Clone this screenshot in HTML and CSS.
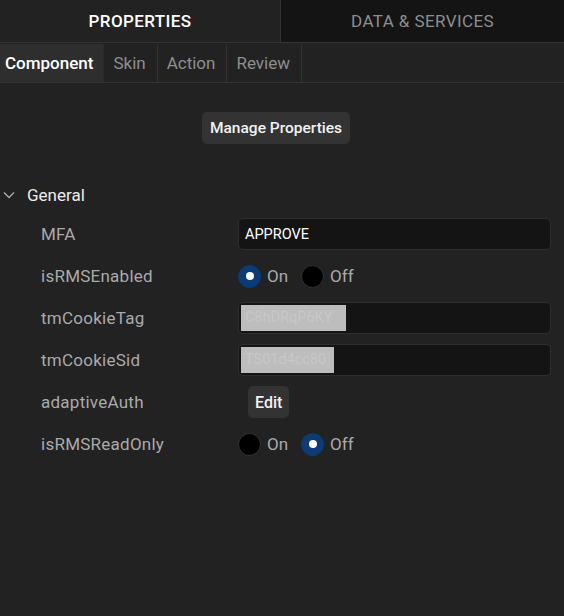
FILE: index.html
```html
<!DOCTYPE html>
<html lang="en">
<head>
  <meta charset="UTF-8">
  <title>Properties</title>
  <link rel="stylesheet" href="styles.css">
</head>
<body>
  <div class="panel">
    <div class="main-tabs">
      <div class="main-tab active">PROPERTIES</div>
      <div class="main-tab">DATA &amp; SERVICES</div>
    </div>
    <div class="sub-tabs">
      <div class="sub-tab active">Component</div>
      <div class="sub-tab">Skin</div>
      <div class="sub-tab">Action</div>
      <div class="sub-tab">Review</div>
    </div>

    <div class="manage">
      <button class="btn">Manage Properties</button>
    </div>

    <div class="section-head">
      <svg class="chevron" width="12" height="8" viewBox="0 0 12 8">
        <path d="M1 1.5 L6 6.5 L11 1.5" fill="none" stroke="#aaa" stroke-width="1.4"/>
      </svg>
      <span>General</span>
    </div>

    <div class="props">
      <div class="row">
        <div class="label">MFA</div>
        <div class="value"><div class="field">APPROVE</div></div>
      </div>
      <div class="row">
        <div class="label">isRMSEnabled</div>
        <div class="value radios">
          <span class="radio checked"></span><span class="radio-text">On</span>
          <span class="radio"></span><span class="radio-text">Off</span>
        </div>
      </div>
      <div class="row">
        <div class="label">tmCookieTag</div>
        <div class="value"><div class="field masked"><span class="mask mask-tag">C8hDRqP6KY</span></div></div>
      </div>
      <div class="row">
        <div class="label">tmCookieSid</div>
        <div class="value"><div class="field masked"><span class="mask mask-sid">TS01d4cc80</span></div></div>
      </div>
      <div class="row">
        <div class="label">adaptiveAuth</div>
        <div class="value"><button class="btn edit">Edit</button></div>
      </div>
      <div class="row">
        <div class="label">isRMSReadOnly</div>
        <div class="value radios">
          <span class="radio"></span><span class="radio-text">On</span>
          <span class="radio checked"></span><span class="radio-text">Off</span>
        </div>
      </div>
    </div>
  </div>
</body>
</html>
```

FILE: styles.css
```css
body {
  margin: 0;
  background: #222;
  font-family: Roboto, 'Liberation Sans', Arial, sans-serif;
  color: #aaa;
}
.panel {
  width: 564px;
  height: 616px;
  background: #222;
}
.main-tabs {
  display: flex;
  height: 42px;
  border-bottom: 1px solid #333;
}
.main-tab {
  flex: 1;
  display: flex;
  align-items: center;
  justify-content: center;
  font-size: 17px;
  color: #8e8e8e;
  background: #141414;
  letter-spacing: 0.4px;
}
.main-tab.active {
  background: #222;
  color: #fff;
  font-weight: 500;
  border-right: 1px solid #333;
  flex: 0 0 280px;
}
.sub-tabs {
  display: flex;
  height: 38px;
  margin-top: 1px;
  border-bottom: 1px solid #333;
}
.sub-tab {
  display: flex;
  align-items: center;
  padding: 0 11px 0 9px;
  font-size: 17px;
  color: #8e8e8e;
  border-right: 1px solid #333;
}
.sub-tab.active {
  background: #2e2e2e;
  color: #fff;
  font-weight: 500;
  padding: 0 10px 0 5px;
  border-right: 1px solid #2a2a2a;
}
.manage {
  display: flex;
  justify-content: center;
  padding-top: 29px;
  padding-right: 12px;
}
.btn {
  background: #333;
  color: #f2f2f2;
  border: none;
  border-radius: 5px;
  font-family: inherit;
  font-size: 15.5px;
  font-weight: 500;
  height: 32px;
  padding: 0 8px;
}
.section-head {
  display: flex;
  align-items: center;
  height: 26px;
  margin-top: 38px;
  font-size: 17px;
  color: #ececec;
}
.chevron {
  margin: 0 12px 0 3px;
}
.props {
  margin-top: 5px;
  padding: 0 13px 0 41px;
}
.row {
  display: grid;
  grid-template-columns: 197px 1fr;
  align-items: center;
  height: 42px;
}
.label {
  font-size: 17px;
  letter-spacing: 0.25px;
  color: #aaa;
}
.field {
  height: 30px;
  background: #141414;
  border: 1px solid #2e2e2e;
  border-radius: 5px;
  display: flex;
  align-items: center;
  padding: 0 6px;
  color: #fff;
  font-size: 14.5px;
}
.field.masked {
  padding: 0 2px;
}
.mask {
  background: #bdbdbd;
  color: #c8c8c8;
  font-size: 14.5px;
  line-height: 26px;
  padding-left: 4px;
  white-space: nowrap;
  overflow: hidden;
}
.mask-tag {
  width: 101px;
}
.mask-sid {
  width: 89px;
}
.radios {
  display: flex;
  align-items: center;
}
.radio {
  width: 21px;
  height: 21px;
  border-radius: 50%;
  background: #000;
  border: 1px solid #333;
  display: flex;
  align-items: center;
  justify-content: center;
}
.radio.checked {
  background: #0b3c78;
  border-color: #0b3c78;
}
.radio.checked::after {
  content: "";
  width: 8px;
  height: 8px;
  border-radius: 50%;
  background: #fff;
}
.radio-text {
  font-size: 17px;
  color: #aaa;
  margin: 0 13px 0 6px;
}
.edit {
  margin-left: 10px;
  height: 32px;
  padding: 0 7px;
  font-size: 16px;
}
```
